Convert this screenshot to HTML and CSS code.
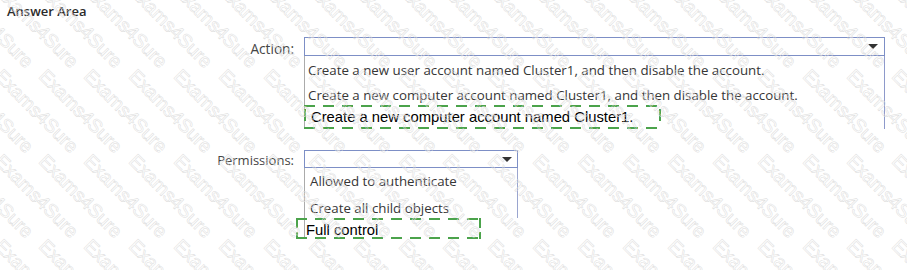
FILE: index.html
```html
<!DOCTYPE html>
<html lang="en">
<head>
<meta charset="utf-8">
<title>Answer Area</title>
<link rel="stylesheet" href="styles.css">
</head>
<body class="body">
<main class="page">
  <h1 class="title">Answer Area</h1>

  <div class="field field-action">
    <div class="label label-action">Action:</div>
    <div class="control">
      <div class="select select-action"><span class="arrow"></span></div>
      <div class="list list-action">
        <div class="opts">
          <div class="opt opt-action">Create a new user account named Cluster1, and then disable the account.</div>
          <div class="opt opt-action opt-second">Create a new computer account named Cluster1, and then disable the account.</div>
        </div>
        <div class="answer answer-action">Create a new computer account named Cluster1.</div>
      </div>
    </div>
  </div>

  <div class="field field-perm">
    <div class="label label-perm">Permissions:</div>
    <div class="control">
      <div class="select select-perm"><span class="arrow"></span></div>
      <div class="list list-perm">
        <div class="opts opts-perm">
          <div class="opt opt-perm">Allowed to authenticate</div>
          <div class="opt opt-perm opt-second">Create all child objects</div>
        </div>
        <div class="answer answer-perm">Full control</div>
      </div>
    </div>
  </div>
</main>

<div class="wm-frame" aria-hidden="true">
<div class="wm">
<span>Exams4Sure</span><span>Exams4Sure</span><span>Exams4Sure</span><span>Exams4Sure</span><span>Exams4Sure</span><span>Exams4Sure</span><span>Exams4Sure</span><span>Exams4Sure</span><span>Exams4Sure</span><span>Exams4Sure</span><span>Exams4Sure</span><span>Exams4Sure</span><span>Exams4Sure</span><span>Exams4Sure</span><span>Exams4Sure</span><span>Exams4Sure</span><span>Exams4Sure</span><span>Exams4Sure</span><span>Exams4Sure</span><span>Exams4Sure</span><span>Exams4Sure</span><span>Exams4Sure</span>
<span>Exams4Sure</span><span>Exams4Sure</span><span>Exams4Sure</span><span>Exams4Sure</span><span>Exams4Sure</span><span>Exams4Sure</span><span>Exams4Sure</span><span>Exams4Sure</span><span>Exams4Sure</span><span>Exams4Sure</span><span>Exams4Sure</span><span>Exams4Sure</span><span>Exams4Sure</span><span>Exams4Sure</span><span>Exams4Sure</span><span>Exams4Sure</span><span>Exams4Sure</span><span>Exams4Sure</span><span>Exams4Sure</span><span>Exams4Sure</span><span>Exams4Sure</span><span>Exams4Sure</span>
<span>Exams4Sure</span><span>Exams4Sure</span><span>Exams4Sure</span><span>Exams4Sure</span><span>Exams4Sure</span><span>Exams4Sure</span><span>Exams4Sure</span><span>Exams4Sure</span><span>Exams4Sure</span><span>Exams4Sure</span><span>Exams4Sure</span><span>Exams4Sure</span><span>Exams4Sure</span><span>Exams4Sure</span><span>Exams4Sure</span><span>Exams4Sure</span><span>Exams4Sure</span><span>Exams4Sure</span><span>Exams4Sure</span><span>Exams4Sure</span><span>Exams4Sure</span><span>Exams4Sure</span>
<span>Exams4Sure</span><span>Exams4Sure</span><span>Exams4Sure</span><span>Exams4Sure</span><span>Exams4Sure</span><span>Exams4Sure</span><span>Exams4Sure</span><span>Exams4Sure</span><span>Exams4Sure</span><span>Exams4Sure</span><span>Exams4Sure</span><span>Exams4Sure</span><span>Exams4Sure</span><span>Exams4Sure</span><span>Exams4Sure</span><span>Exams4Sure</span><span>Exams4Sure</span><span>Exams4Sure</span><span>Exams4Sure</span><span>Exams4Sure</span><span>Exams4Sure</span><span>Exams4Sure</span>
</div>
</div>
</body>
</html>
```
FILE: styles.css
```css
* { box-sizing: border-box; margin: 0; padding: 0; }

html { background: #fff; }

.body {
  position: relative;
  width: 907px;
  height: 270px;
  overflow: hidden;
  background: #fff;
  font-family: "Open Sans", "Noto Sans", sans-serif;
  color: #333;
}

.page { padding-top: 3px; }

.title {
  margin-left: 7px;
  font-size: 13px;
  font-weight: 600;
  line-height: 16px;
  color: #2a2a2a;
}

.field {
  display: grid;
  grid-template-columns: 294px auto;
  column-gap: 10px;
  align-items: start;
  justify-content: start;
}
.field-action { margin-top: 18px; }
.field-perm { margin-top: 21px; }

.label {
  text-align: right;
  font-size: 13px;
  line-height: 17px;
  color: #454545;
  white-space: nowrap;
}
.label-action { padding-top: 3px; font-size: 13.6px; }
.label-perm { padding-top: 2px; }

.select {
  display: flex;
  justify-content: flex-end;
  align-items: center;
  border: 1px solid #7d8fc6;
  background: #fff;
  padding-right: 6px;
}
.select-action { width: 581px; height: 19px; }
.select-perm { width: 214px; height: 18px; padding-right: 5px; }

.arrow {
  width: 0;
  height: 0;
  border-left: 5px solid transparent;
  border-right: 5px solid transparent;
  border-top: 5px solid #333;
}

.list { border-left: 1px solid #ababab; }
.list-action { width: 581px; border-right: 1px solid #8e9acb; }
.list-perm { width: 214px; }
.opts-perm { border-right: 1px solid #9aa5cf; }

.opt {
  height: 25px;
  padding-top: 6px;
  font-size: 13.3px;
  line-height: 17px;
  color: #363636;
  white-space: nowrap;
}
.opt-action { padding-left: 3px; }
.opt-action.opt-second { height: 24px; }
.opt-perm { padding-left: 5px; height: 26px; padding-top: 5px; }
.opt-perm.opt-second { height: 24px; padding-top: 6px; }

.answer {
  font-family: "Liberation Sans", Arial, sans-serif;
  font-size: 14.8px;
  line-height: 17px;
  color: #000;
  white-space: nowrap;
  background:
    repeating-linear-gradient(90deg, #4ba34b 0 11px, transparent 11px 19px) 0 0 / 100% 2px no-repeat,
    repeating-linear-gradient(90deg, #4ba34b 0 11px, transparent 11px 19px) 0 100% / 100% 2px no-repeat,
    var(--vdash) 0 0 / 2px 100% no-repeat,
    var(--vdash) 100% 0 / 2px 100% no-repeat;
}
.answer-action {
  --vdash: linear-gradient(180deg, transparent 0 4px, #4ba34b 4px 16px, transparent 16px);
  width: 357px;
  height: 24px;
  margin-left: -1px;
  padding: 4px 0 0 7px;
}
.answer-perm {
  --vdash: repeating-linear-gradient(180deg, #4ba34b 0 10px, transparent 10px 14px);
  width: 185px;
  height: 21px;
  margin-left: -9px;
  padding: 4px 0 0 10px;
}

.wm-frame {
  position: absolute;
  inset: 0;
  overflow: hidden;
  pointer-events: none;
  z-index: 2;
}
.wm {
  position: absolute;
  left: -40.4px;
  top: -19px;
  display: grid;
  grid-template-columns: repeat(22, 44.9px);
  grid-auto-rows: 85px;
}
.wm span {
  display: block;
  width: 0;
  height: 0;
  white-space: nowrap;
  font-family: "Liberation Sans", Arial, sans-serif;
  font-size: 19px;
  line-height: 19px;
  color: transparent;
  -webkit-text-stroke: 0.5px #dcdcdc;
  transform: rotate(45deg);
  transform-origin: 0 0;
}
```
